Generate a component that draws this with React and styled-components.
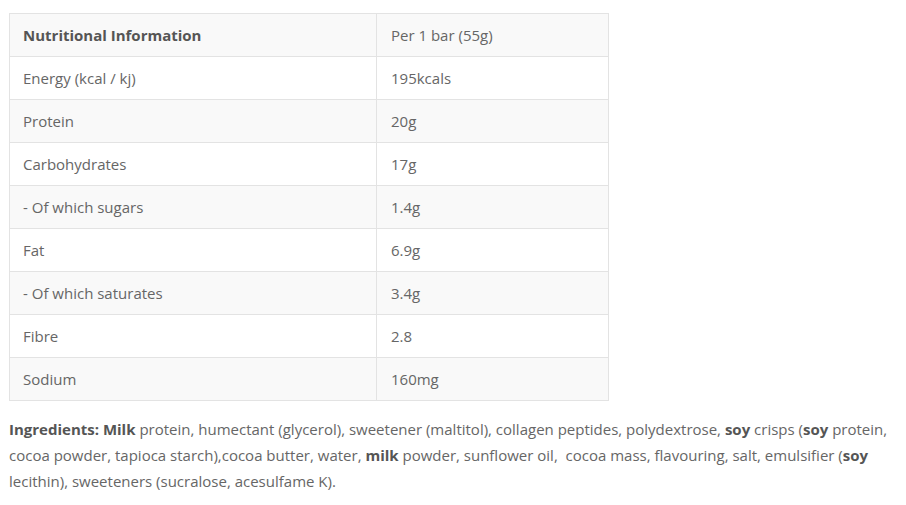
import React from "react";
import styled, { createGlobalStyle } from "styled-components";

const GlobalStyle = createGlobalStyle`
  body {
    margin: 0;
    background: #fff;
    font-family: "Open Sans", "Liberation Sans", sans-serif;
    color: #666;
  }
`;

const Page = styled.div`
  padding: 13px 9px 0;
`;

const Table = styled.table`
  width: 600px;
  border-collapse: collapse;
  font-size: 15px;
  border: 1px solid #e3e3e3;
`;

const Row = styled.tr`
  background: ${(p) => (p.$alt ? "#f9f9f9" : "#fff")};
`;

const Cell = styled.td`
  height: 42px;
  padding: 0 13px;
  border: 1px solid #e3e3e3;
  vertical-align: middle;
  color: #666;
  font-weight: ${(p) => (p.$head ? 700 : 400)};
  ${(p) => p.$head && "color: #555;"}
  &:first-child {
    width: 340px;
  }
  &:last-child {
    padding-left: 14px;
  }
`;

const Ingredients = styled.p`
  margin: 15px 0 0;
  width: 890px;
  font-size: 15px;
  line-height: 26px;
  color: #666;

  & b {
    color: #555;
    font-weight: 700;
  }
`;

const rows = [
  ["Energy (kcal / kj)", "195kcals"],
  ["Protein", "20g"],
  ["Carbohydrates", "17g"],
  ["- Of which sugars", "1.4g"],
  ["Fat", "6.9g"],
  ["- Of which saturates", "3.4g"],
  ["Fibre", "2.8"],
  ["Sodium", "160mg"],
];

export default function App() {
  return (
    <>
      <GlobalStyle />
      <Page>
        <Table>
          <tbody>
            <Row $alt>
              <Cell $head>Nutritional Information</Cell>
              <Cell>Per 1 bar (55g)</Cell>
            </Row>
            {rows.map(([name, value], i) => (
              <Row key={name} $alt={i % 2 === 1}>
                <Cell>{name}</Cell>
                <Cell>{value}</Cell>
              </Row>
            ))}
          </tbody>
        </Table>
        <Ingredients>
          <b>Ingredients: Milk</b> protein, humectant (glycerol), sweetener (maltitol), collagen peptides, polydextrose, <b>soy</b> crisps (<b>soy</b> protein, cocoa powder, tapioca starch),cocoa butter, water, <b>milk</b> powder, sunflower oil,&nbsp; cocoa mass, flavouring, salt, emulsifier (<b>soy</b> lecithin), sweeteners (sucralose, acesulfame K).
        </Ingredients>
      </Page>
    </>
  );
}
